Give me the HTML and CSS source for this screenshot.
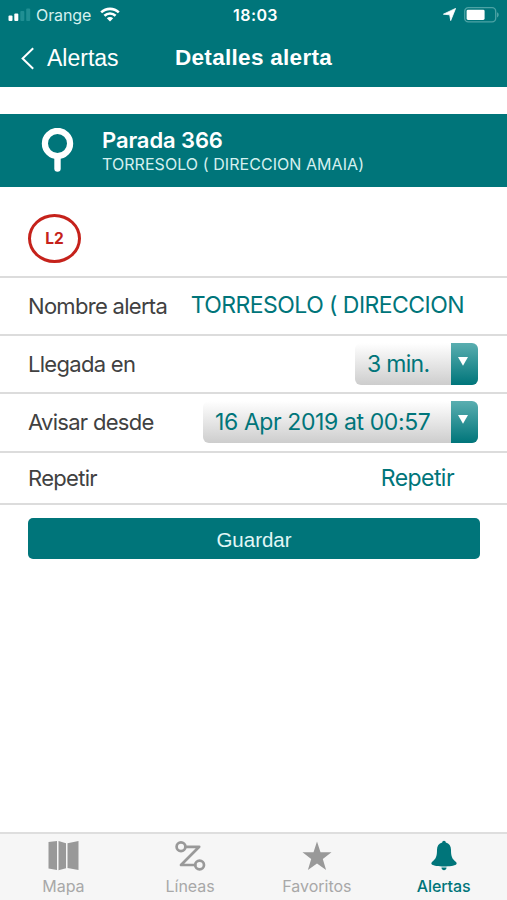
FILE: index.html
```html
<!DOCTYPE html>
<html lang="es">
<head>
<meta charset="utf-8">
<title>Detalles alerta</title>
<link rel="stylesheet" href="styles.css">
</head>
<body>
<div class="app">
  <header class="top">
    <div class="status">
      <div class="carrier">
        <svg width="23" height="16" viewBox="0 0 23 16"><g fill="#fff"><rect x="0.5" y="8.5" width="4" height="5.5" rx="1"/><rect x="6.3" y="6.5" width="4" height="7.5" rx="1"/></g><g fill="#208f93"><rect x="12.3" y="4" width="4" height="10" rx="1"/><rect x="18.2" y="1.5" width="4" height="12.5" rx="1"/></g></svg>
        <span class="network">Orange</span>
        <svg class="wifi" width="20" height="15" viewBox="0 0 20 15"><g fill="none" stroke="#fff" stroke-width="2.6"><path d="M1.2 5.4C6.2.7 13.8.7 18.8 5.4"/><path d="M4.4 8.8c3.2-3 8-3 11.2 0"/></g><path d="M6.8 11.2c1.9-1.6 4.5-1.6 6.4 0L10 14.4z" fill="#fff"/></svg>
      </div>
      <span class="clock">18:03</span>
      <div class="indicators">
        <svg width="13" height="13" viewBox="0 0 13 13"><path d="M12.6.4L7.7 12.6 6.7 6.8.4 6.2z" fill="#fff" stroke="#fff" stroke-width=".8" stroke-linejoin="round"/></svg>
        <svg width="37" height="16" viewBox="0 0 37 16"><rect x="2.7" y=".7" width="31" height="14.2" rx="3.6" fill="none" stroke="#4da3a5" stroke-width="1.3"/><rect x="4.6" y="2.7" width="18" height="10.3" rx="1.4" fill="#fff"/><path d="M35 5.2c2.3.8 2.3 4.4 0 5.200z" fill="#4da3a5"/></svg>
      </div>
    </div>
    <nav class="navbar">
      <a class="back"><svg width="14" height="23" viewBox="0 0 14 23"><path d="M12.2 1.2L1.6 11.5l10.6 10.3" fill="none" stroke="#fff" stroke-width="2"/></svg><span>Alertas</span></a>
      <h1>Detalles alerta</h1>
    </nav>
  </header>
  <section class="stop">
    <svg width="33" height="45" viewBox="0 0 33 45"><circle cx="16.5" cy="15.5" r="12.6" fill="none" stroke="#fff" stroke-width="6.2"/><path d="M16.5 29v11.5" stroke="#fff" stroke-width="6.4" stroke-linecap="round"/></svg>
    <div class="stop-text"><h2>Parada 366</h2><p>TORRESOLO ( DIRECCION AMAIA)</p></div>
  </section>
  <div class="lines"><span class="line-badge">L2</span></div>
  <main class="form">
    <div class="row"><label>Nombre alerta</label><span class="value name">TORRESOLO ( DIRECCION</span></div>
    <div class="row"><label>Llegada en</label><div class="select short"><span>3 min.</span><i><svg width="10" height="9" viewBox="0 0 10 9"><path d="M0 0h10L5 8.8z" fill="#fff"/></svg></i></div></div>
    <div class="row"><label>Avisar desde</label><div class="select long"><span>16 Apr 2019 at 00:57</span><i><svg width="10" height="9" viewBox="0 0 10 9"><path d="M0 0h10L5 8.8z" fill="#fff"/></svg></i></div></div>
    <div class="row last"><label>Repetir</label><span class="value repeat">Repetir</span></div>
  </main>
  <button class="save">Guardar</button>
  <footer class="tabs">
    <a class="tab"><svg width="32" height="32" viewBox="0 0 32 32" fill="#999"><path d="M1.5 2l8.5-1v29l-8.500-1.500zM11.500 1l7.500 2.200v25l-7.500 2zM20.500 3.200L31.500 1v29l-11-2z"/></svg><span>Mapa</span></a>
    <a class="tab"><svg width="32" height="32" viewBox="0 0 32 32" fill="none" stroke="#999" stroke-width="2.7"><circle cx="7" cy="6.8" r="4.4"/><circle cx="25.6" cy="25" r="4.4"/><path d="M11.4 6.8h13.8L7 25h14.2" stroke-linejoin="round" stroke-linecap="round"/></svg><span>Líneas</span></a>
    <a class="tab"><svg width="32" height="32" viewBox="0 0 32 32" fill="#999"><path d="M16 1.5l3.5 10.8h11L21.8 19l3.3 11L16 23.4 6.9 30l3.3-11-8.7-6.7h11z"/></svg><span>Favoritos</span></a>
    <a class="tab active"><svg width="32" height="32" viewBox="0 0 32 32" fill="#00757a"><path d="M16 .8c1.1 0 1.7.7 1.8 1.8 3.4.8 5.2 3.6 5.2 7.2 0 6.5.9 9 5 12.2.9.8.8 1.9.1 2.4C26.4 25.7 21.5 26.4 16 26.4S5.6 25.7 3.9 24.4c-.7-.5-.8-1.6.1-2.4 4.1-3.2 5-5.7 5-12.2 0-3.6 1.8-6.4 5.2-7.2.1-1.1.7-1.8 1.8-1.8z"/><path d="M13.5 27.500h5c0 3.500-5 3.500-5 0z"/></svg><span>Alertas</span></a>
  </footer>
</div>
</body>
</html>
```
FILE: styles.css
```css
* { box-sizing: border-box; }
body { margin: 0; background: #fff; font-family: Inter, "Liberation Sans", sans-serif; }
h1, h2, p { margin: 0; }
svg { display: block; flex: none; }
span, label, h1, h2, p { white-space: nowrap; }
.app { width: 507px; height: 900px; display: flex; flex-direction: column; overflow: hidden; }
.top { flex: none; height: 87px; background: #00757a; color: #fff; }
.status { height: 29px; display: grid; grid-template-columns: 1fr auto 1fr; align-items: center; padding: 0 8px; }
.carrier { display: flex; align-items: center; }
.network { font-size: 16px; margin-left: 5px; letter-spacing: -0.1px; color: #d5f0ef; }
.wifi { margin-left: 9px; }
.clock { font-size: 16px; font-weight: 600; letter-spacing: 0.4px; padding-left: 4px; }
.indicators { display: flex; align-items: center; justify-content: flex-end; gap: 6px; }
.navbar { height: 58px; display: flex; align-items: center; font-family: "Liberation Sans", Arial, sans-serif; }
.back { display: flex; align-items: center; width: 155px; padding-left: 21px; gap: 12px; font-size: 23px; }
.navbar h1 { margin-left: 20px; font-size: 22.5px; font-weight: 700; letter-spacing: 0.3px; }
.stop { flex: none; height: 73px; margin-top: 27px; background: #00757a; color: #fff; display: flex; align-items: center; padding-left: 41px; }
.stop-text { margin-left: 28px; padding-bottom: 1px; }
.stop h2 { font-size: 22px; line-height: 27px; font-weight: 600; letter-spacing: -0.1px; }
.stop p { font-size: 16px; line-height: 20px; color: #d5f0ef; letter-spacing: 0.06px; }
.lines { flex: none; height: 88.5px; padding: 26.5px 28px 0; }
.line-badge { display: flex; align-items: center; justify-content: center; width: 53px; height: 49px; border: 3px solid #c5221b; border-radius: 50%; color: #c5221b; font-size: 15.5px; font-weight: 700; }
.form { flex: none; border-top: 2px solid #dcdcdc; }
.row { height: 58.4px; border-bottom: 2px solid #dcdcdc; display: flex; align-items: center; justify-content: space-between; padding: 0 29px 0 28px; color: #414141; font-size: 22px; letter-spacing: -0.7px; }
.row.last { height: 52.4px; }
.value { color: #00757a; font-size: 23px; letter-spacing: -0.55px; }
.name { margin-right: 14px; padding-bottom: 2px; }
.repeat { margin-right: 24px; }
.select { display: flex; height: 42px; border-radius: 6px; overflow: hidden; background: linear-gradient(#fff, #cdcdcd); color: #00757a; font-size: 23px; letter-spacing: -0.4px; align-items: center; justify-content: space-between; padding-left: 12px; }
.select i { width: 27px; height: 42px; padding: 14px 3px 0 0; display: flex; justify-content: center; background: linear-gradient(#5aaeb0, #00757a); }
.short { width: 123px; letter-spacing: -0.7px; }
.long { width: 275px; }
.save { flex: none; margin: 13px 27px 0 28px; height: 41px; padding: 2px 0 0; border: 0; border-radius: 5px; background: #00757a; color: #e2f7f6; font: 20.5px "Liberation Sans", Arial, sans-serif; }
.tabs { flex: none; height: 68px; margin-top: auto; border-top: 2px solid #dedede; background: #f6f6f6; display: grid; grid-template-columns: repeat(4, 1fr); }
.tab { display: flex; flex-direction: column; align-items: center; padding-top: 6px; color: #a8a8a8; font-size: 16px; line-height: 22px; gap: 2.5px; }
.active { color: #00757a; font-weight: 500; letter-spacing: -0.1px; }
```
